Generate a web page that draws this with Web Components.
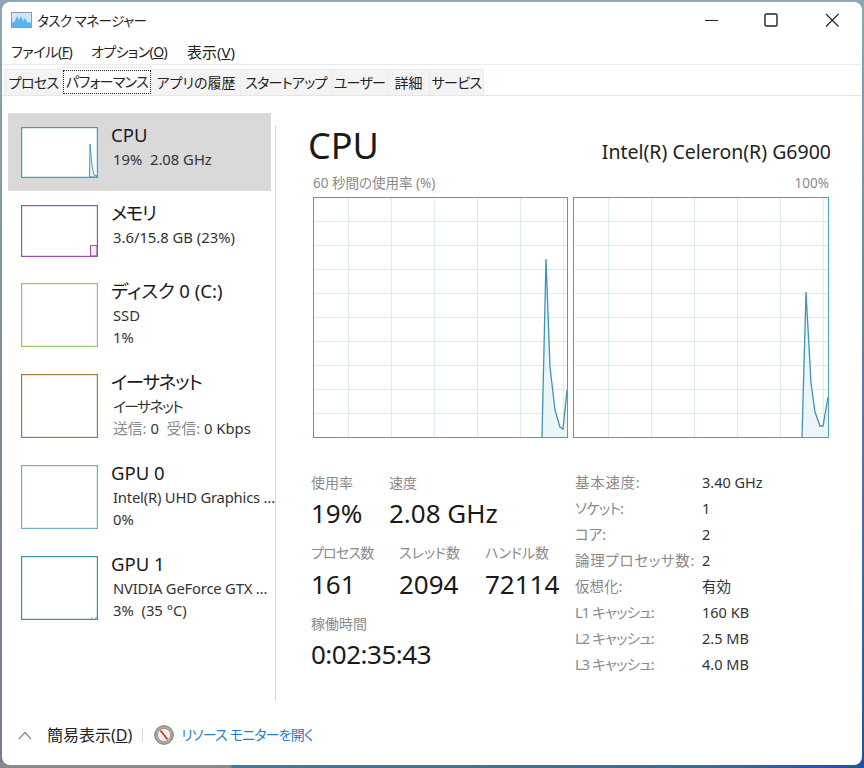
<!DOCTYPE html>
<html lang="ja"><head><meta charset="utf-8"><style>
html,body{margin:0;padding:0;height:768px;overflow:hidden;}
body{font-family:"Noto Sans","Noto Sans CJK JP",sans-serif;color:#1a1a1a;font-feature-settings:"palt";
background:
 linear-gradient(to right,#8a8a8a 0,#8a8a8a 230px,#3a7d96 233px,#2f6fa0 700px,#2050a8 100%) left bottom/100% 6px no-repeat,
 linear-gradient(to bottom,#8fa5b3 0,#5a83a8 45%,#2050a8 100%) right top/4px 100% no-repeat,
 linear-gradient(to bottom,#8fa5b3 0,#7f8a9a 50%,#77799a 100%) left top/4px 100% no-repeat,
 #8fa5b3;}
</style></head><body>
<tm-window>
  <tm-titlebar title-text="タスク マネージャー"></tm-titlebar>
  <tm-menu></tm-menu>
  <tm-tabs></tm-tabs>
  <tm-main>
    <tm-sidebar slot="side">
      <side-item name="CPU" selected color="#3f9dbf" thumbh="51" kind="cpu" h="78" l1="19%&#160;&#160;2.08 GHz"></side-item>
      <side-item name="メモリ" ls="-1.5" color="#9b4fb0" thumbh="52" kind="mem" h="78" l1="3.6/15.8 GB (23%)"></side-item>
      <side-item name="ディスク 0 (C:)" color="#95c46f" thumbh="64" h="91" l1="SSD" l2="1%"></side-item>
      <side-item name="イーサネット" ls="-1.3" ls1="-1.6" color="#a8793a" thumbh="64" h="91" l1="イーサネット" l2="送信: 0&#160;&#160;受信: 0 Kbps" graylabels></side-item>
      <side-item name="GPU 0" ls1="-.2" color="#6fadc4" thumbh="64" h="91" l1="Intel(R) UHD Graphics …" l2="0%"></side-item>
      <side-item name="GPU 1" ls1="-.2" color="#3f8fb5" thumbh="64" kind="gpu" h="91" l1="NVIDIA GeForce GTX …" l2="3%&#160;&#160;(35 °C)"></side-item>
    </tm-sidebar>
    <cpu-panel slot="panel"></cpu-panel>
  </tm-main>
  <tm-footer></tm-footer>
</tm-window>
<script>
function el(tag, html){
  customElements.define(tag, class extends HTMLElement{
    constructor(){super();this.attachShadow({mode:'open'}).innerHTML = html;}
  });
}

el('tm-window',`<style>:host{display:flex;flex-direction:column;width:860px;height:763px;margin:2px 2px 0 2px;background:#fff;border-radius:8px;overflow:hidden;box-sizing:border-box;}</style><slot></slot>`);

customElements.define('tm-titlebar',class extends HTMLElement{connectedCallback(){
 this.attachShadow({mode:'open'}).innerHTML=`<style>
 :host{display:flex;align-items:center;height:35px;padding-left:9px;font-size:13.5px;box-sizing:border-box;flex:none}
 .t{margin-left:5px;line-height:20px;color:#222;position:relative;top:1px;letter-spacing:-.5px}
 .btns{margin-left:auto;display:flex;height:35px;align-items:center}
 .b{width:61px;height:35px;display:flex;align-items:center;justify-content:center;box-sizing:border-box}
 .m{padding-left:4px}
 svg{display:block}
 </style>
 <svg width="21" height="16" viewBox="0 0 21 16"><rect x=".5" y=".5" width="20" height="15" fill="#cfe6f7" stroke="#8e9aa5"/><path d="M1 14 L1 11 L4 9 L6 4 L8 8 L10 4 L12 9 L14 6 L16 10 L20 11 L20 15 L1 15Z" fill="#5db2ec"/></svg>
 <span class="t">${this.getAttribute('title-text')}</span>
 <div class="btns">
  <div class="b m"><svg width="14" height="14"><path d="M0 7.5H13" stroke="#222" stroke-width="1.1"/></svg></div>
  <div class="b"><svg width="14" height="14" viewBox="0 0 14 14"><rect x="1" y="1" width="12" height="12" rx="1.5" fill="none" stroke="#222" stroke-width="1.4"/></svg></div>
  <div class="b"><svg width="14" height="14" viewBox="0 0 14 14"><path d="M1 1L13.5 13.5M13.5 1L1 13.5" stroke="#222" stroke-width="1.1" fill="none"/></svg></div>
 </div>`;
}});

el('tm-menu',`<style>
 :host{display:flex;height:28px;flex:none;box-sizing:border-box;border-bottom:1px solid #ececec;padding:2px 0 0 9px;font-size:14px;align-items:center;color:#222}
 span{line-height:20px;white-space:nowrap}
 .a{width:80px;letter-spacing:-.4px}.b{width:96px;letter-spacing:-.6px}.c{font-size:15px}
 u{text-underline-offset:1px}
</style><span class="a">ファイル(<u>F</u>)</span><span class="b">オプション(<u>O</u>)</span><span class="c">表示(<u>V</u>)</span>`);

el('tm-tabs',`<style>
 :host{display:flex;height:31px;flex:none;box-sizing:border-box;border-bottom:1px solid #e6e6e6;padding:4px 0 0 2px;font-size:14px;color:#222}
 .tab{height:26px;line-height:26px;text-align:center;background:#f3f3f3;border:1px solid #ececec;border-bottom:0;box-sizing:border-box;margin-left:-1px;white-space:nowrap}
 .k{letter-spacing:-.7px}
 .sel{background:#fff;height:28px;margin-top:-2px;position:relative;line-height:27px}
 .sel span{outline:1px dotted #222;display:inline-block;line-height:22px;width:86px}
</style>
<div class="tab k" style="width:59px;margin-left:0">プロセス</div><div class="tab sel k" style="width:90px"><span>パフォーマンス</span></div><div class="tab" style="width:90px">アプリの履歴</div><div class="tab k" style="width:92px">スタートアップ</div><div class="tab k" style="width:57px">ユーザー</div><div class="tab" style="width:43px">詳細</div><div class="tab k" style="width:55px">サービス</div>`);

el('tm-main',`<style>
 :host{display:flex;flex:none;height:613px;box-sizing:border-box;}
 .s{width:273px;flex:none;padding:17px 0 0 6px;box-sizing:border-box}
 .d{width:1px;background:#d8d8d8;margin-top:29px;height:575px;flex:none}
 .p{flex:1}
</style><div class="s"><slot name="side"></slot></div><div class="d"></div><div class="p"><slot name="panel"></slot></div>`);

el('tm-sidebar',`<style>:host{display:block;width:263px}</style><slot></slot>`);

customElements.define('side-item',class extends HTMLElement{connectedCallback(){
 const g=n=>this.getAttribute(n);
 const sel=this.hasAttribute('selected');
 const tw=77,th=+g('thumbh');
 let inner='';
 if(g('kind')==='cpu') inner=`<path d="M68.5 ${th-1}L69 17L71 ${th-12}L73 ${th-3}L76 ${th-2}L76 ${th-1}Z" fill="#e8f3f8" stroke="#3f9dbf" stroke-width="1"/>`;
 if(g('kind')==='mem') inner=`<path d="M69.5 ${th-1}V40.5H76V${th-1}Z" fill="#f1e9f5" stroke="#9b4fb0" stroke-width="1"/>`;
 if(g('kind')==='gpu') inner=`<path d="M70 ${th-1.5}L72 ${th-2.5}M74 ${th-1.5}L76 ${th-3}" stroke="#6fadc4" fill="none"/>`;
 let l2=g('l2')||'';
 if(this.hasAttribute('graylabels')) l2=`<span class="g">送信:</span> 0&#160;&#160;<span class="g">受信:</span> 0 Kbps`;
 this.attachShadow({mode:'open'}).innerHTML=`<style>
 :host{display:flex;height:${g('h')}px;box-sizing:border-box;padding:10px 0 0 13px;gap:13px;${sel?'background:#d9d9d9;':''}}
 svg{display:block;margin-top:4px;flex:none}
 .n{font-size:18.5px;line-height:24px;color:#1a1a1a;white-space:nowrap;letter-spacing:${g('ls')||0}px}
 .l{font-size:14.8px;line-height:22px;color:#333;white-space:nowrap;padding-left:2px}
 .l1{margin-top:1px;letter-spacing:${g('ls1')||0}px}
 .g{color:#8a8a8a}
 </style>
 <svg width="${tw}" height="${th}" viewBox="0 0 ${tw} ${th}"><rect x=".5" y=".5" width="${tw-1}" height="${th-1}" fill="#fff"/>${inner}<rect x=".6" y=".6" width="${tw-1.2}" height="${th-1.2}" fill="none" stroke="${g('color')}" stroke-width="1.2"/></svg>
 <div><div class="n">${g('name')}</div><div class="l l1">${g('l1')}</div>${l2?`<div class="l">${l2}</div>`:''}</div>`;
}});

customElements.define('usage-graph',class extends HTMLElement{connectedCallback(){
 const w=+this.getAttribute('w'), xs=this.getAttribute('xs').split(',').map(Number), pts=this.getAttribute('pts');
 let grid='';
 for(const x of xs) grid+=`<path d="M${x+.5} 0V240"/>`;
 for(let i=1;i<10;i++){grid+=`<path d="M0 ${i*24+.5}H${w}"/>`;}
 const arr=pts.split(' ');
 const first=arr[0].split(',')[0], last=arr[arr.length-1].split(',')[0];
 this.attachShadow({mode:'open'}).innerHTML=`<style>:host{display:block;flex:none;width:${w}px;height:241px}svg{display:block}</style>
 <svg width="${w}" height="241" viewBox="0 0 ${w} 241"><rect width="${w}" height="241" fill="#fff"/>
 <g stroke="#dcebf1" stroke-width="1" fill="none">${grid}</g>
 <polygon points="${pts} ${last},240 ${first},240" fill="#e9f3f7" fill-opacity=".85"/>
 <polyline points="${pts}" fill="none" stroke="#3f93b5" stroke-width="1.3"/>
 <rect x=".5" y=".5" width="${w-1}" height="240" fill="none" stroke="#4ba0bd" stroke-width="1"/></svg>`;
}});

customElements.define('stat-item',class extends HTMLElement{connectedCallback(){
 const g=n=>this.getAttribute(n);
 this.attachShadow({mode:'open'}).innerHTML=`<style>
 :host{display:block;white-space:nowrap;width:${g('w')}px;flex:none}
 .l{font-size:14px;line-height:20px;color:#8a8a8a;letter-spacing:${g('lsl')||0}px}
 .v{font-size:26px;line-height:36px;color:#1a1a1a;margin-top:${g('vm')||3}px;letter-spacing:${g('lsv')||0}px}
 </style><div class="l">${g('label')}</div><div class="v">${g('value')}</div>`;
}});

el('spec-table',`<style>
 :host{display:grid;grid-template-columns:127px auto;grid-auto-rows:26px;font-size:14.5px;line-height:26px;align-content:start;white-space:nowrap;margin-top:-1px}
 .k{color:#8a8a8a}.v{color:#333}
 .w{letter-spacing:.7px}.n{letter-spacing:-.8px}
</style>
<div class="k w">基本速度:</div><div class="v">3.40 GHz</div>
<div class="k n">ソケット:</div><div class="v">1</div>
<div class="k">コア:</div><div class="v">2</div>
<div class="k w">論理プロセッサ数:</div><div class="v">2</div>
<div class="k">仮想化:</div><div class="v">有効</div>
<div class="k n">L1 キャッシュ:</div><div class="v">160 KB</div>
<div class="k n">L2 キャッシュ:</div><div class="v">2.5 MB</div>
<div class="k n">L3 キャッシュ:</div><div class="v">4.0 MB</div>`);

el('cpu-panel',`<style>
 :host{display:block;padding:25px 33px 0 32px;box-sizing:border-box;height:100%}
 .head{display:flex;justify-content:space-between;align-items:flex-end;height:50px;margin-right:-2px}
 h1{font-weight:400;font-size:36px;line-height:50px;margin:0;color:#1a1a1a}
 .proc{font-size:19.5px;line-height:28px;color:#222;margin-bottom:5px}
 .cap{display:flex;justify-content:space-between;font-size:13.5px;line-height:18px;color:#8a8a8a;padding:0 0 0 5px;margin:2px 0 4px;height:20px;align-items:center}
 .graphs{display:flex;gap:5px;margin-left:5px;height:241px}
 .lower{display:flex;margin-top:32px}
 .left{width:264px;margin-left:3px;flex:none;padding-top:3px}
 .row{display:flex;height:71px}
 .row.a{height:70px}
</style>
<div class="head"><h1>CPU</h1><div class="proc">Intel(R) Celeron(R) G6900</div></div>
<div class="cap"><span>60 秒間の使用率 (%)</span><span>100%</span></div>
<div class="graphs">
 <usage-graph w="255" xs="35,78,121,164,207,250" pts="229,240 233,62 237,170 242,213 247,230 250,232 254,193"></usage-graph>
 <usage-graph w="256" xs="35,78,121,164,207,250" pts="229,240 233,95 238,186 242,215 247,229 250,229 255,200"></usage-graph>
</div>
<div class="lower">
 <div class="left">
  <div class="row a"><stat-item w="78" vm="2" label="使用率" value="19%"></stat-item><stat-item w="120" vm="2" label="速度" value="2.08 GHz"></stat-item></div>
  <div class="row"><stat-item w="88" lsl="-.8" label="プロセス数" value="161"></stat-item><stat-item w="86" label="スレッド数" value="2094"></stat-item><stat-item w="80" label="ハンドル数" value="72114"></stat-item></div>
  <div class="row"><stat-item w="160" vm="2" lsv="-.5" label="稼働時間" value="0:02:35:43"></stat-item></div>
 </div>
 <spec-table></spec-table>
</div>`);

el('tm-footer',`<style>
 :host{display:flex;align-items:center;height:50px;box-sizing:border-box;padding:0 0 4px 16px;flex:1}
 .n{font-size:16px;line-height:20px;margin-left:15px;color:#222;white-space:nowrap}
 .sep{width:1px;height:14px;background:#d5d5d5;margin:0 11px 0 10px}
 .lnk{font-size:14px;line-height:20px;color:#2a7cc7;margin-left:7px;letter-spacing:-.8px;white-space:nowrap}
 svg{display:block;flex:none}
 u{text-underline-offset:1px}
</style>
<svg width="14" height="9" viewBox="0 0 14 9"><path d="M1 8L7 1.5L13 8" fill="none" stroke="#8a8a8a" stroke-width="1.2"/></svg>
<span class="n">簡易表示(<u>D</u>)</span><span class="sep"></span>
<svg width="20" height="20" viewBox="0 0 20 20"><circle cx="10" cy="10" r="9.3" fill="#aeaa9e" stroke="#77756d" stroke-width="1"/><circle cx="10" cy="10" r="6.6" fill="#f3eee6" stroke="#8c8a82" stroke-width=".8"/><path d="M6.5 5.5L13.5 14.5" stroke="#c6392e" stroke-width="1.8"/></svg>
<span class="lnk">リソース モニターを開く</span>`);
</script>
</body></html>
